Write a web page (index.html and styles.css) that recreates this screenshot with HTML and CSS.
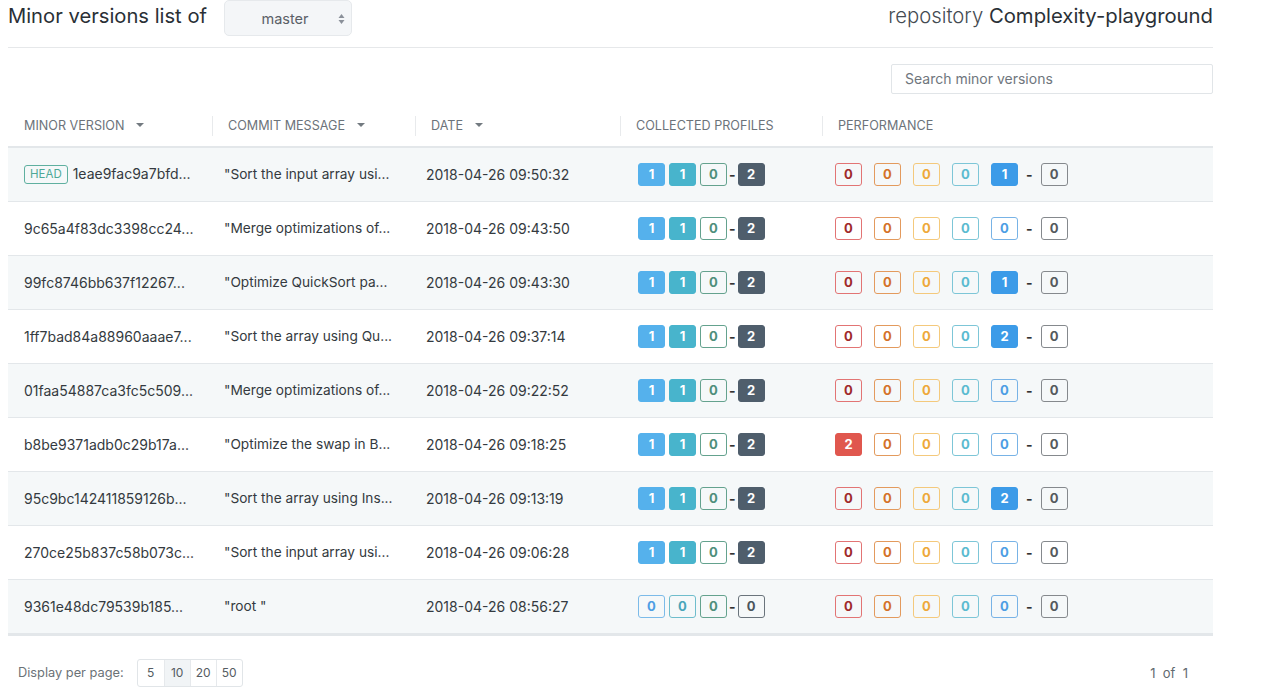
FILE: index.html
```html
<!DOCTYPE html>
<html>
<head>
<meta charset="utf-8">
<link rel="stylesheet" href="styles.css">
</head>
<body>
<div class="page">
  <header class="top">
    <div class="title-left">
      <span class="title">Minor versions list of</span>
      <div class="select">
        <span class="select-val">master</span>
        <svg class="select-arrows" width="7" height="12" viewBox="0 0 7 12"><path d="M3.5 1 L6.5 5 L0.5 5 Z" fill="#8a9099"/><path d="M3.5 11 L6.5 7 L0.5 7 Z" fill="#8a9099"/></svg>
      </div>
    </div>
    <div class="title-right"><span class="light">repository</span> Complexity-playground</div>
  </header>
  <div class="rule"></div>
  <div class="search-row">
    <div class="search">Search minor versions</div>
  </div>
  <table class="tbl">
    <colgroup>
      <col class="c1"><col class="c2"><col class="c3"><col class="c4"><col class="c5">
    </colgroup>
    <thead>
      <tr>
        <th><div class="th-in first">Minor version <span class="caret"></span></div></th>
        <th><div class="th-in">Commit message <span class="caret"></span></div></th>
        <th><div class="th-in">Date <span class="caret"></span></div></th>
        <th><div class="th-in">Collected profiles</div></th>
        <th><div class="th-in">Performance</div></th>
      </tr>
    </thead>
    <tbody>
      <tr>
        <td><span class="head-badge">HEAD</span> 1eae9fac9a7bfd...</td>
        <td>"Sort the input array usi...</td>
        <td>2018-04-26 09:50:32</td>
        <td><div class="badges"><span class="b f-lblue">1</span><span class="b f-teal">1</span><span class="b o-green">0</span><span class="dash">-</span><span class="b f-dark">2</span></div></td>
        <td><div class="perf"><span class="b o-red">0</span><span class="b o-orange">0</span><span class="b o-yellow">0</span><span class="b o-cyan">0</span><span class="b f-blue">1</span><span class="dash">-</span><span class="b o-gray">0</span></div></td>
      </tr>
      <tr>
        <td>9c65a4f83dc3398cc24...</td>
        <td>"Merge optimizations of...</td>
        <td>2018-04-26 09:43:50</td>
        <td><div class="badges"><span class="b f-lblue">1</span><span class="b f-teal">1</span><span class="b o-green">0</span><span class="dash">-</span><span class="b f-dark">2</span></div></td>
        <td><div class="perf"><span class="b o-red">0</span><span class="b o-orange">0</span><span class="b o-yellow">0</span><span class="b o-cyan">0</span><span class="b o-blue">0</span><span class="dash">-</span><span class="b o-gray">0</span></div></td>
      </tr>
      <tr>
        <td>99fc8746bb637f12267...</td>
        <td>"Optimize QuickSort pa...</td>
        <td>2018-04-26 09:43:30</td>
        <td><div class="badges"><span class="b f-lblue">1</span><span class="b f-teal">1</span><span class="b o-green">0</span><span class="dash">-</span><span class="b f-dark">2</span></div></td>
        <td><div class="perf"><span class="b o-red">0</span><span class="b o-orange">0</span><span class="b o-yellow">0</span><span class="b o-cyan">0</span><span class="b f-blue">1</span><span class="dash">-</span><span class="b o-gray">0</span></div></td>
      </tr>
      <tr>
        <td>1ff7bad84a88960aaae7...</td>
        <td>"Sort the array using Qu...</td>
        <td>2018-04-26 09:37:14</td>
        <td><div class="badges"><span class="b f-lblue">1</span><span class="b f-teal">1</span><span class="b o-green">0</span><span class="dash">-</span><span class="b f-dark">2</span></div></td>
        <td><div class="perf"><span class="b o-red">0</span><span class="b o-orange">0</span><span class="b o-yellow">0</span><span class="b o-cyan">0</span><span class="b f-blue">2</span><span class="dash">-</span><span class="b o-gray">0</span></div></td>
      </tr>
      <tr>
        <td>01faa54887ca3fc5c509...</td>
        <td>"Merge optimizations of...</td>
        <td>2018-04-26 09:22:52</td>
        <td><div class="badges"><span class="b f-lblue">1</span><span class="b f-teal">1</span><span class="b o-green">0</span><span class="dash">-</span><span class="b f-dark">2</span></div></td>
        <td><div class="perf"><span class="b o-red">0</span><span class="b o-orange">0</span><span class="b o-yellow">0</span><span class="b o-cyan">0</span><span class="b o-blue">0</span><span class="dash">-</span><span class="b o-gray">0</span></div></td>
      </tr>
      <tr>
        <td>b8be9371adb0c29b17a...</td>
        <td>"Optimize the swap in B...</td>
        <td>2018-04-26 09:18:25</td>
        <td><div class="badges"><span class="b f-lblue">1</span><span class="b f-teal">1</span><span class="b o-green">0</span><span class="dash">-</span><span class="b f-dark">2</span></div></td>
        <td><div class="perf"><span class="b f-red">2</span><span class="b o-orange">0</span><span class="b o-yellow">0</span><span class="b o-cyan">0</span><span class="b o-blue">0</span><span class="dash">-</span><span class="b o-gray">0</span></div></td>
      </tr>
      <tr>
        <td>95c9bc142411859126b...</td>
        <td>"Sort the array using Ins...</td>
        <td>2018-04-26 09:13:19</td>
        <td><div class="badges"><span class="b f-lblue">1</span><span class="b f-teal">1</span><span class="b o-green">0</span><span class="dash">-</span><span class="b f-dark">2</span></div></td>
        <td><div class="perf"><span class="b o-red">0</span><span class="b o-orange">0</span><span class="b o-yellow">0</span><span class="b o-cyan">0</span><span class="b f-blue">2</span><span class="dash">-</span><span class="b o-gray">0</span></div></td>
      </tr>
      <tr>
        <td>270ce25b837c58b073c...</td>
        <td>"Sort the input array usi...</td>
        <td>2018-04-26 09:06:28</td>
        <td><div class="badges"><span class="b f-lblue">1</span><span class="b f-teal">1</span><span class="b o-green">0</span><span class="dash">-</span><span class="b f-dark">2</span></div></td>
        <td><div class="perf"><span class="b o-red">0</span><span class="b o-orange">0</span><span class="b o-yellow">0</span><span class="b o-cyan">0</span><span class="b o-blue">0</span><span class="dash">-</span><span class="b o-gray">0</span></div></td>
      </tr>
      <tr>
        <td>9361e48dc79539b185...</td>
        <td>"root "</td>
        <td>2018-04-26 08:56:27</td>
        <td><div class="badges"><span class="b o-lblue">0</span><span class="b o-teal">0</span><span class="b o-green">0</span><span class="dash">-</span><span class="b o-dark">0</span></div></td>
        <td><div class="perf"><span class="b o-red">0</span><span class="b o-orange">0</span><span class="b o-yellow">0</span><span class="b o-cyan">0</span><span class="b o-blue">0</span><span class="dash">-</span><span class="b o-gray">0</span></div></td>
      </tr>
    </tbody>
  </table>
  <footer class="foot">
    <div class="per-page">
      <span class="pp-label">Display per page:</span>
      <div class="btn-group">
        <span class="pbtn">5</span><span class="pbtn active">10</span><span class="pbtn">20</span><span class="pbtn">50</span>
      </div>
    </div>
    <div class="pages">1&nbsp; of&nbsp; 1</div>
  </footer>
</div>
</body>
</html>
```

FILE: styles.css
```css
* { box-sizing: border-box; }
html, body { margin: 0; padding: 0; background: #fff; }
body {
  font-family: "Inter", "Liberation Sans", sans-serif;
  color: #333a40;
}
.page {
  width: 1205px;
  margin-left: 8px;
}
.top {
  display: flex;
  justify-content: space-between;
  align-items: flex-start;
  height: 36px;
}
.title-left {
  display: flex;
  align-items: flex-start;
}
.title {
  font-size: 20.2px;
  line-height: 31px;
  color: #2a3036;
}
.select {
  margin-left: 17px;
  width: 128px;
  height: 36px;
  background: #f4f6f8;
  border: 1px solid #e6e9ec;
  border-radius: 5px;
  display: flex;
  align-items: center;
  justify-content: center;
  position: relative;
}
.select-val {
  font-size: 14.5px;
  color: #5a6067;
  margin-right: 6px;
}
.select-arrows {
  position: absolute;
  right: 6px;
  top: 12px;
}
.title-right {
  font-size: 20.3px;
  line-height: 31px;
  color: #2a3036;
}
.title-right .light {
  font-weight: 300;
  color: #444b52;
}
.rule {
  margin-top: 11px;
  height: 1px;
  background: #e6e8ea;
}
.search-row {
  display: flex;
  justify-content: flex-end;
  margin-top: 16px;
}
.search {
  width: 322px;
  height: 30px;
  border: 1px solid #e1e5e8;
  border-radius: 2px;
  font-size: 14px;
  line-height: 28px;
  color: #6f767d;
  padding-left: 13px;
}
.tbl {
  margin-top: 10px;
  width: 1205px;
  border-collapse: collapse;
  table-layout: fixed;
}
col.c1 { width: 204px; }
col.c2 { width: 203px; }
col.c3 { width: 205px; }
col.c4 { width: 202px; }
col.c5 { width: 391px; }
.tbl th {
  padding: 12px 0 10px 0;
  text-align: left;
  font-weight: 400;
  border-bottom: 2px solid #e3e7ea;
}
.th-in {
  font-size: 12.6px;
  line-height: 20px;
  height: 20px;
  text-transform: uppercase;
  color: #6c737a;
  border-left: 1px solid #e8eaec;
  padding-left: 15px;
  white-space: nowrap;
}
.th-in.first {
  border-left-color: transparent;
}
.caret {
  display: inline-block;
  width: 0;
  height: 0;
  border-left: 4px solid transparent;
  border-right: 4px solid transparent;
  border-top: 4px solid #737a80;
  margin-left: 8px;
  vertical-align: 3px;
}
.tbl td {
  height: 54px;
  padding: 0 0 0 16px;
  font-size: 14px;
  color: #343a40;
  border-bottom: 1px solid #e3e7ea;
  white-space: nowrap;
  overflow: hidden;
}
.tbl td:nth-child(2) { padding-left: 12px; font-size: 13.7px; }
.tbl td:nth-child(3) { padding-left: 11px; }
.tbl td:nth-child(4) { padding-left: 18px; }
.tbl td:nth-child(5) { padding-left: 13px; }
.tbl tbody tr:nth-child(odd) td { background: #f5f8f9; }
.tbl tbody tr:last-child td { border-bottom: 3px solid #e3e7ea; height: 55px; }
.head-badge {
  display: inline-block;
  font-size: 11.5px;
  line-height: 17px;
  padding: 0 5px;
  border: 1px solid #5fb0a0;
  color: #4ea896;
  border-radius: 3px;
  margin-right: 1px;
  vertical-align: 1px;
}
.badges, .perf {
  display: flex;
  align-items: center;
}
.badges { gap: 4px; }
.perf { gap: 12px; }
.b {
  display: inline-flex;
  align-items: center;
  justify-content: center;
  width: 27px;
  height: 23px;
  border-radius: 3px;
  font-size: 13px;
  font-weight: 700;
  border: 1px solid transparent;
}
.dash {
  font-size: 14px;
  font-weight: 700;
  color: #333;
  margin: 0 -2px;
}
.perf .dash { margin: 0 -4px; }
.f-lblue { background: #55b1ec; color: #fff; border-color: #55b1ec; }
.f-teal { background: #48b4cc; color: #fff; border-color: #48b4cc; }
.f-dark { background: #4f5e6c; color: #fff; border-color: #4f5e6c; }
.f-blue { background: #3c9be8; color: #fff; border-color: #3c9be8; }
.f-red { background: #e0574e; color: #fff; border-color: #e0574e; }
.o-green { border-color: #64a28e; color: #4f8f7b; }
.o-lblue { border-color: #7cbbe9; color: #4e9ee4; }
.o-teal { border-color: #6fbdcc; color: #4aa5b9; }
.o-dark { border-color: #6a747c; color: #4b555d; }
.o-red { border-color: #e27474; color: #a02a2a; }
.o-orange { border-color: #e39a5d; color: #d47228; }
.o-yellow { border-color: #f4c97c; color: #eea93a; }
.o-cyan { border-color: #7dc6d7; color: #5bbbd0; }
.o-blue { border-color: #78b3e6; color: #4d9ee4; }
.o-gray { border-color: #85898d; color: #55595d; }
.foot {
  margin-top: 23px;
  display: flex;
  justify-content: space-between;
  align-items: center;
}
.per-page {
  display: flex;
  align-items: center;
  padding-left: 10px;
}
.pp-label {
  font-size: 12.8px;
  color: #6b7277;
  margin-right: 13px;
}
.btn-group {
  display: flex;
  border: 1px solid #e1e5e8;
  border-radius: 3px;
  height: 28px;
  overflow: hidden;
}
.pbtn {
  display: flex;
  align-items: center;
  justify-content: center;
  width: 26px;
  font-size: 12px;
  color: #555c62;
  border-left: 1px solid #e6e9ec;
}
.pbtn:first-child { border-left: none; }
.pbtn.active { background: #f1f4f6; }
.pages {
  font-size: 13px;
  color: #62696f;
  margin-right: 25px;
}
```
